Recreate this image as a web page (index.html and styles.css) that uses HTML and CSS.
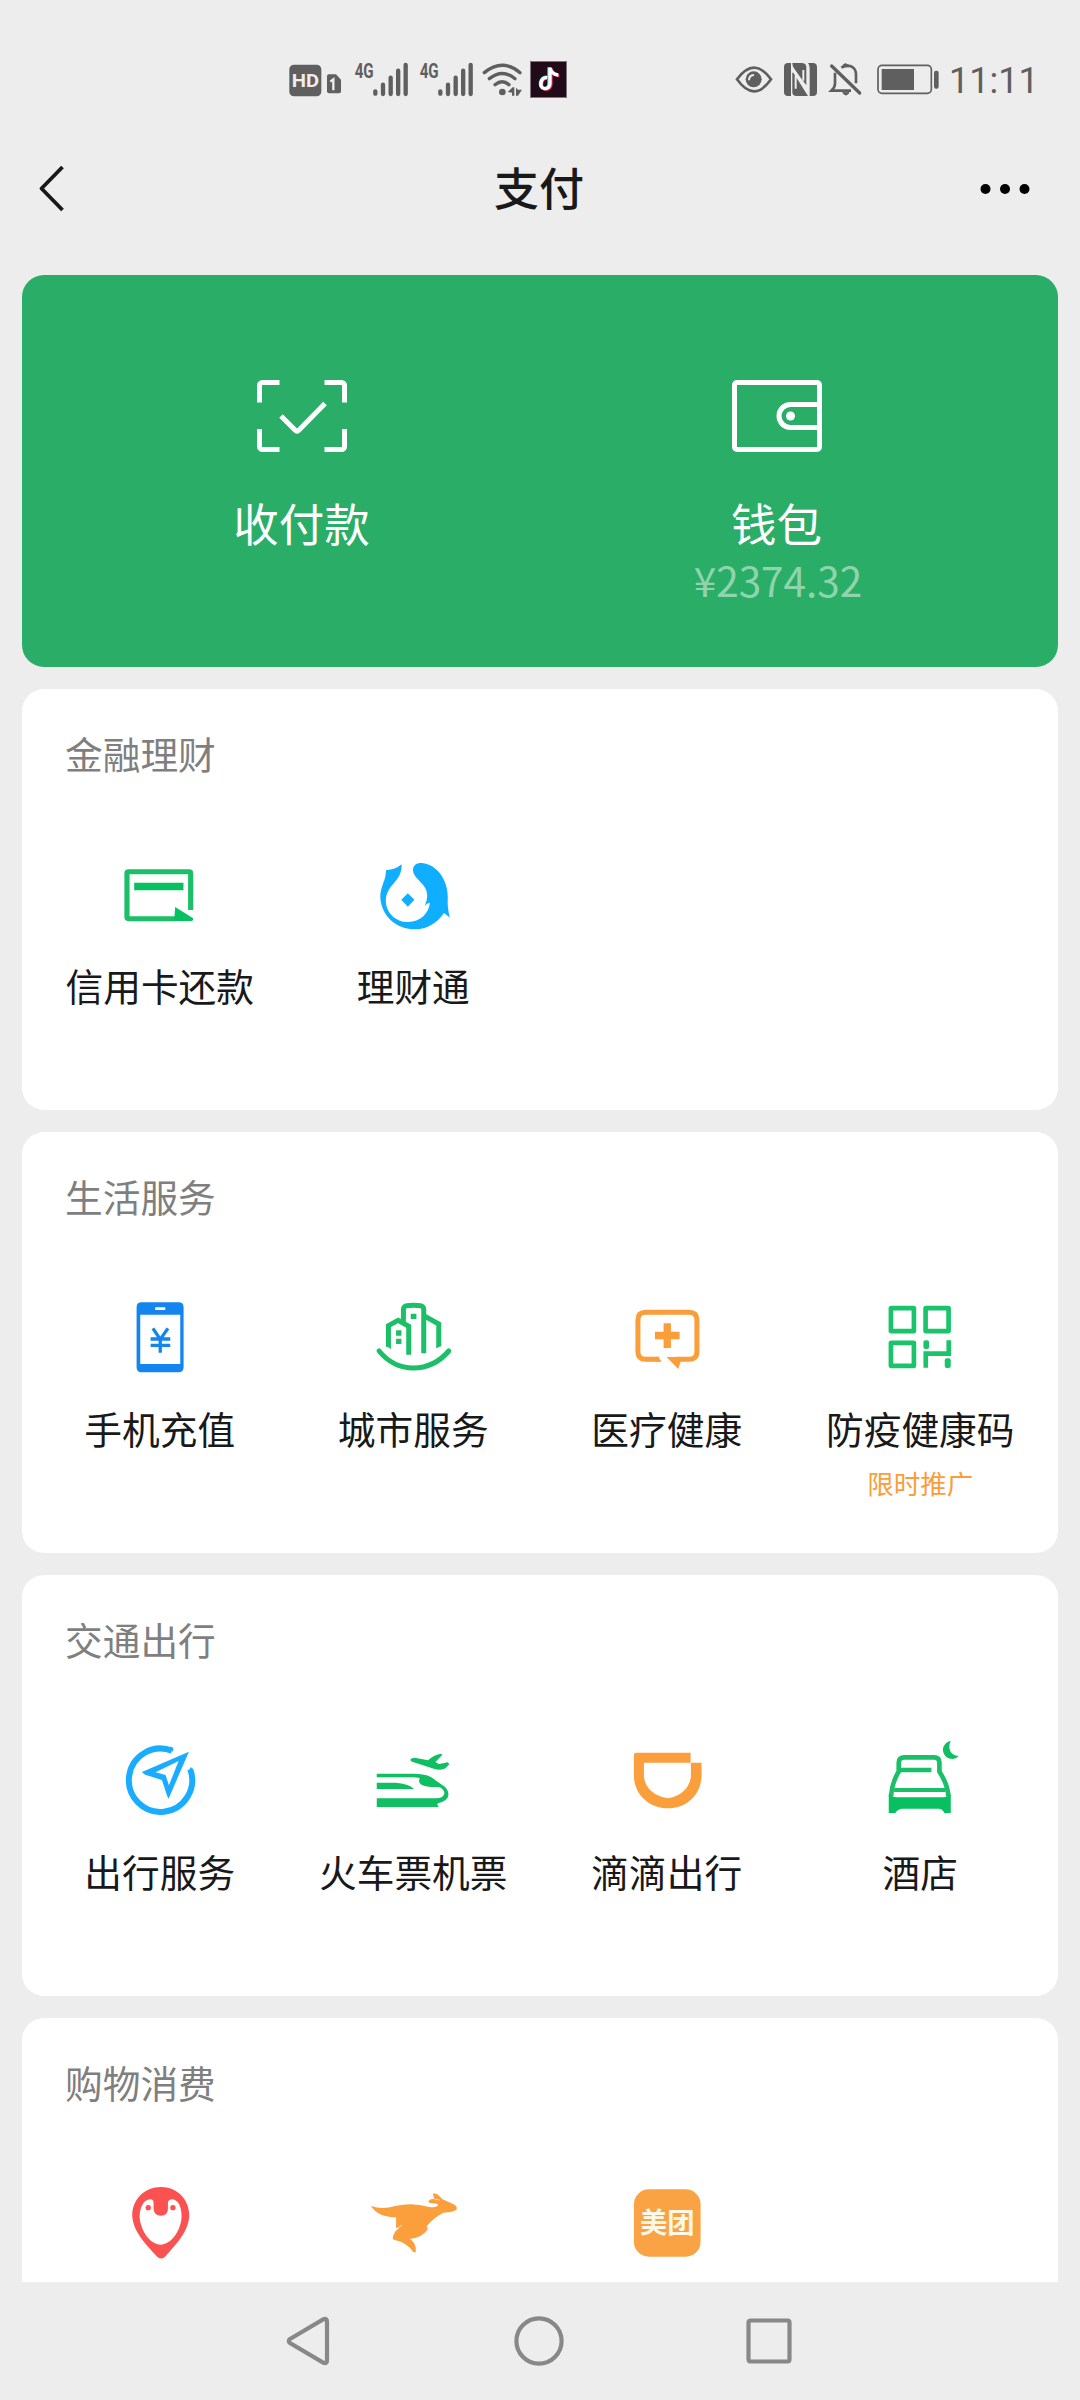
FILE: index.html
```
<!DOCTYPE html>
<html lang="zh-CN">
<head>
<meta charset="utf-8">
<title>支付</title>
<link rel="stylesheet" href="styles.css">
</head>
<body>
<div class="screen">
  <div class="status">
    <div class="status-left">
      <svg width="65" height="80" viewBox="45 0 195 240">
        <rect x="58" y="74" width="96" height="95" rx="14" fill="#5f5f5f"/>
        <text x="106" y="142" class="hd-text" text-anchor="middle" textLength="82" lengthAdjust="spacingAndGlyphs">HD</text>
        <path d="M176 103h22l15 16v35q0 6-6 6h-30q-6 0-6-6v-45q0-6 5-6z" fill="#5f5f5f"/>
        <path d="M181 125l9-7v33" fill="none" stroke="#ededed" stroke-width="7"/>
      </svg>
      <svg width="65" height="80" viewBox="240 0 195 240">
        <text x="254" y="113" class="net-text" textLength="57" lengthAdjust="spacingAndGlyphs">4G</text>
        <path d="M316 154v7M339 134v28M362 113v49M384.500 92v70M407 75v87" class="signal"/>
      </svg>
      <svg width="65" height="80" viewBox="240 0 195 240">
        <text x="254" y="113" class="net-text" textLength="57" lengthAdjust="spacingAndGlyphs">4G</text>
        <path d="M316 154v7M339 134v28M362 113v49M384.500 92v70M407 75v87" class="signal"/>
      </svg>
      <svg width="46" height="80" viewBox="630 0 138 240">
        <path d="M643 98q54-44 107 0M658 116q39-31 77 0M675 134q22-18 42 0" fill="none" stroke="#5f5f5f" stroke-width="10" stroke-linecap="round"/>
        <circle cx="697" cy="156" r="10" fill="#5f5f5f"/>
        <path d="M713 156l15-14h5v25h-7v-9zM738 143l6 6h12l-12 18h-6z" fill="#5f5f5f"/>
      </svg>
      <svg width="44" height="80" viewBox="768 0 132 240">
        <rect x="781.500" y="64.500" width="108" height="108" fill="#210b18" stroke="#84737e" stroke-width="3"/>
        <g fill="none" stroke-width="10">
          <path d="M830 112c-20-4-27 31-8 33 10 1 15-6 15-15V82c2 12 12 22 25 22" stroke="#55d8dc"/>
          <path d="M834 115c-20-4-27 31-8 33 10 1 17-6 17-15V85c2 12 12 22 25 22" stroke="#e22b55"/>
          <path d="M832 113c-20-4-27 31-8 33 10 1 16-6 16-15V83c2 12 12 22 25 22" stroke="#fff"/>
        </g>
      </svg>
    </div>
    <div class="status-right">
      <svg width="48" height="80" viewBox="66 0 144 240">
        <path d="M81 118q51-70 102 0q-51 72-102 0z" fill="none" stroke="#5f5f5f" stroke-width="8"/>
        <circle cx="131" cy="118" r="24" fill="#5f5f5f"/>
        <path d="M117 121q0-15 15-16" fill="none" stroke="#ededed" stroke-width="6"/>
      </svg>
      <svg width="46" height="80" viewBox="210 0 138 240">
        <path d="M234 69h9v99h-9q-12 0-12-12V81q0-12 12-12z" fill="#5f5f5f"/>
        <path d="M247 69h30q12 1 12 14v53L250 84q-3-8-3-15z" fill="#5f5f5f"/>
        <path d="M294 69h15q12 0 12 12v75q0 12-12 12h-10V84q0-9-5-15z" fill="#5f5f5f"/>
        <path d="M250 98L294 168H257q-10-1-10-11V98z" fill="#5f5f5f"/>
        <path d="M257 106v40M280 90v32" stroke="#ededed" stroke-width="6"/>
        <path d="M246 82l48 73" stroke="#ededed" stroke-width="7"/>
      </svg>
      <svg width="48" height="80" viewBox="348 0 144 240">
        <path d="M375 98v33q0 10-11 21h59M394 83q18-11 33-2q11 7 11 23v26" fill="none" stroke="#5f5f5f" stroke-width="8"/>
        <path d="M398 82q0-10 8-11q9 1 9 11M398 158h19q-9 14-19 0z" fill="#5f5f5f" stroke="#5f5f5f" stroke-width="3"/>
        <path d="M365 78l84 81" stroke="#5f5f5f" stroke-width="10" stroke-linecap="round"/>
      </svg>
      <svg width="77" height="80" viewBox="492 0 231 240">
        <rect x="504" y="76" width="160" height="84" rx="12" fill="none" stroke="#5f5f5f" stroke-width="5"/>
        <rect x="515" y="87" width="97" height="63" fill="#5f5f5f"/>
        <rect x="672" y="92" width="14" height="54" rx="6" fill="#5f5f5f"/>
      </svg>
      <span class="clock">11:11</span>
    </div>
  </div>

  <header class="topbar">
    <svg width="28" height="52" viewBox="0 0 28 52"><path d="M25.500 4L4.500 25.500 25.500 47" fill="none" stroke="#191919" stroke-width="3.800" stroke-linejoin="round"/></svg>
    <h1 class="page-title">支付</h1>
    <svg width="50" height="12" viewBox="0 0 50 12"><circle cx="5.500" cy="6" r="5"/><circle cx="25" cy="6" r="5"/><circle cx="44.500" cy="6" r="5"/></svg>
  </header>

  <main class="cards">
    <section class="hero">
      <div class="hero-item">
        <svg class="hero-icon" viewBox="0 0 90 72" fill="none" stroke="#fff" stroke-width="5">
          <path d="M2.500 22.500V5.500a3 3 0 0 1 3-3H22.500M67.500 2.500H84.500a3 3 0 0 1 3 3V22.500M87.500 49V66.500a3 3 0 0 1-3 3H67.500M22.500 69.500H5.500a3 3 0 0 1-3-3V49M24 36L38 50Q40 52 42 50L68 23.500"/>
        </svg>
        <span class="hero-label">收付款</span>
      </div>
      <div class="hero-item">
        <svg class="hero-icon" viewBox="0 0 90 72" fill="none" stroke="#fff" stroke-width="5">
          <rect x="2.500" y="2.500" width="85" height="67" rx="2.500"/>
          <path d="M87 24.500H58.500a11.500 11.500 0 0 0 0 23H87"/>
          <circle cx="58.500" cy="36" r="4.500" fill="#fff" stroke="none"/>
        </svg>
        <span class="hero-label">钱包</span>
        <span class="amount">¥2374.32</span>
      </div>
    </section>

    <section class="card">
      <h2 class="card-title">金融理财</h2>
      <div class="grid">
        <div class="item">
          <svg class="icon" viewBox="324.500 531 278.800 288" preserveAspectRatio="none">
            <path d="M508 746H372q-4 0-4-4V610q0-5 4-5H549q4 0 4 5V720" fill="none" stroke="#1bbf68" stroke-width="15"/>
            <path d="M389 638H532V661H389zM508 711L560 745V748q0 5-5 5H505z" fill="#07c160"/>
          </svg>
          <span class="label">信用卡还款</span>
        </div>
        <div class="item">
          <svg class="icon" viewBox="1060.600 531 278.800 288" preserveAspectRatio="none" fill="#10aeff">
            <path d="M1122 600Q1146 601 1167 583C1168 608 1158 625 1143 641C1128 658 1121 674 1121 692C1122 729 1150 756 1185 756C1221 755 1246 731 1249 698Q1240 699 1234 707C1244 685 1245 663 1229 644C1215 628 1199 616 1200 598C1202 584 1212 578 1226 579C1270 583 1302 631 1301 683Q1299 711 1307 743Q1300 736 1290 729C1270 759 1240 779 1203 778C1148 776 1107 735 1105 681C1105 655 1117 635 1120 617Q1121 609 1122 600z"/>
            <path d="M1185 670L1204 689 1185 710 1166 689z"/>
          </svg>
          <span class="label">理财通</span>
        </div>
      </div>
    </section>

    <section class="card">
      <h2 class="card-title">生活服务</h2>
      <div class="grid">
        <div class="item">
          <svg class="icon" viewBox="35.250 60 288 288">
            <path fill-rule="evenodd" d="M124 97H235Q250 97 250 112V292Q250 307 235 307H124Q109 307 109 292V112Q109 97 124 97zM120 134V282H240V134zM165 112V120H195V112z" fill="#1485ee"/>
            <path d="M158 175L180 208 203 175M180 207V248M151 207H210M151 226H210" fill="none" stroke="#1485ee" stroke-width="10"/>
          </svg>
          <span class="label">手机充值</span>
        </div>
        <div class="item">
          <svg class="icon" viewBox="795.750 60 288 288">
            <g fill="none" stroke="#1bbf68" stroke-width="15">
              <path d="M927 254V169L895 151 866 167V230M911 160V119Q911 109 921 107Q941 104 962 107Q972 109 972 119V250M976 139L1017 162V229"/>
              <path d="M838 243Q880 294 941 294Q1003 294 1047 243" stroke-linecap="round"/>
            </g>
            <path d="M933 131h17v16h-17zM889 181h16v16h-16zM889 206h16v16h-16zM858 228l16 1v8zM1009 235v-8h16z" fill="#1bbf68"/>
          </svg>
          <span class="label">城市服务</span>
        </div>
        <div class="item">
          <svg class="icon" viewBox="56.250 60 288 288">
            <path d="M177 268H136Q113 268 113 245V150Q113 127 136 127H266Q290 127 290 150V245Q290 268 266 268H225" fill="none" stroke="#fa9d3b" stroke-width="15"/>
            <path d="M165 260h7l13 15h-20zM199 261H245L234 297zM190 160h22v25h26v23h-26v26h-22v-26h-26v-23h26z" fill="#fa9d3b"/>
          </svg>
          <span class="label">医疗健康</span>
        </div>
        <div class="item">
          <svg class="icon" viewBox="816.750 60 288 288">
            <g fill="none" stroke="#1bc36a" stroke-width="14">
              <rect x="873.500" y="114.500" width="69" height="69" rx="1"/><rect x="977.500" y="114.500" width="69" height="69" rx="1"/><rect x="873.500" y="218.500" width="69" height="69" rx="1"/>
              <path d="M1047 211V251H978V293"/>
            </g>
            <rect x="971" y="211" width="17" height="26" rx="6" fill="#1bc36a"/><rect x="1035" y="265" width="18" height="29" rx="6" fill="#1bc36a"/>
          </svg>
          <span class="label">防疫健康码</span>
          <span class="note">限时推广</span>
        </div>
      </div>
    </section>

    <section class="card">
      <h2 class="card-title">交通出行</h2>
      <div class="grid">
        <div class="item">
          <svg class="icon" viewBox="35.250 39 288 288">
            <path d="M215 92A95 95 0 1 0 270 148" fill="none" stroke="#1aadff" stroke-width="18"/>
            <path fill-rule="evenodd" d="M266 95L205 236Q202 232 200 226L185 180 135 164Q128 160 125 156zM166 157L196 165 206 196 235 123z" fill="#1aadff"/>
            <path d="M211 78l9 8-4 11zM264 155l8-15 8 15z" fill="#1aadff"/>
          </svg>
          <span class="label">出行服务</span>
        </div>
        <div class="item">
          <svg class="icon" viewBox="795.750 39 288 288">
            <path d="M831 161H939Q986 160 1006 180L1035 200Q1047 211 1046 226Q1044 243 1014 250Q1011 253 1017 261H831V235H1007Q1033 235 1034 219Q1030 202 1014 201Q980 202 965 194Q954 188 960 174Q948 172 939 172H831zM831 188H887Q926 190 943 207H831z" fill="#10bf62"/>
            <path d="M932 118Q938 112 949 114L985 121Q1004 103 1024 101L1028 104 1007 126 1017 132Q1031 131 1043 127L1049 132 1037 145Q1024 153 1002 146L937 125Q931 123 932 118z" fill="#10bf62"/>
          </svg>
          <span class="label">火车票机票</span>
        </div>
        <div class="item">
          <svg class="icon" viewBox="56.250 39 288 288">
            <path d="M108 98H271V128H304V170C300 230 255 265 203 265C149 265 105 227 101 173V106Q101 98 108 98zM131 128V172Q140 224 203 235Q262 224 272 172V128z" fill-rule="evenodd" fill="#fa9f3c"/>
          </svg>
          <span class="label">滴滴出行</span>
        </div>
        <div class="item">
          <svg class="icon" viewBox="816.750 39 288 288">
            <g fill="none" stroke="#1bbf68" stroke-width="14">
              <path d="M897 158V128Q897 112 914 112H1003Q1019 112 1019 128V155Q1044 193 1046 230M903 150H995M897 154Q875 192 874 230"/>
              <path d="M883 210H1037" stroke-width="12"/>
            </g>
            <path d="M867 222Q876 232 890 232H1031Q1044 232 1053 222V279H1034Q1028 266 1016 266H906Q894 267 887 279H867z" fill="#07c160"/>
            <path d="M1053 62Q1031 68 1029 90Q1033 117 1060 117Q1070 116 1077 107C1056 109 1041 87 1053 62z" fill="#10bf62"/>
          </svg>
          <span class="label">酒店</span>
        </div>
      </div>
    </section>

    <section class="card">
      <h2 class="card-title">购物消费</h2>
      <div class="grid">
        <div class="item">
          <svg class="icon" viewBox="35.250 78 288 288">
            <path d="M182 111C232 111 268 149 267 199C263 249 225 285 196 319Q183 332 169 319C140 285 100 249 96 199C95 149 132 111 182 111z" fill="#fa5151"/>
            <path d="M150 148Q159 148 160 158V177Q162 197 182 197Q202 197 203 177V158Q205 148 216 148C235 149 245 174 244 201C242 244 211 284 181 284C151 284 121 244 118 201C118 174 130 148 150 148z" fill="#fff"/>
            <circle cx="144" cy="173" r="8" fill="#fa5151"/><circle cx="218" cy="173" r="8" fill="#fa5151"/>
          </svg>
        </div>
        <div class="item">
          <svg class="icon" viewBox="795.750 78 288 288">
            <path d="M813 168Q849 180 886 168Q938 156 985 170Q1004 174 1013 168L1015 162 987 158Q985 146 1004 147L999 131Q1013 127 1027 147L1065 164Q1073 170 1071 178Q1065 187 1030 188Q1001 204 981 228L984 238Q965 265 930 267Q950 277 948 307L940 306Q926 280 879 268Q878 249 898 234H889V202Q836 202 813 168z" fill="#fa9f3c"/>
            <path d="M890 236l17-10" stroke="#fff" stroke-width="2"/>
            <path d="M1005 148l15 2" stroke="#fff" stroke-width="2"/>
          </svg>
        </div>
        <div class="item">
          <svg class="icon" viewBox="176.250 78 288 288">
            <rect x="221" y="118" width="200" height="202" rx="45" fill="#faa345"/>
            <text x="321" y="249" class="brand" text-anchor="middle" textLength="164" lengthAdjust="spacingAndGlyphs">美团</text>
          </svg>
        </div>
      </div>
    </section>
  </main>

  <nav class="navbar">
    <svg width="46" height="54" viewBox="0 0 46 54"><path d="M4 25L37.500 5.200Q41 4 41 7.500V46.500Q41 50 37.500 48.800L4 29Q1.500 27 4 25z"/></svg>
    <svg width="50" height="50" viewBox="0 0 50 50"><circle cx="25" cy="25" r="22.600"/></svg>
    <svg width="46" height="46" viewBox="0 0 46 46"><rect x="2.500" y="2.500" width="41" height="41" rx="2"/></svg>
  </nav>
</div>
</body>
</html>
```
FILE: styles.css
```
* { box-sizing: border-box; }

body {
  margin: 0;
  background: #ededed;
  color: #191919;
  font-family: "Noto Sans CJK SC", sans-serif;
}

.screen {
  width: 1080px;
  height: 2400px;
  display: flex;
  flex-direction: column;
  overflow: hidden;
}

svg { display: block; flex: none; }

.status {
  height: 120px;
  padding: 40px 45px 0 285px;
  display: flex;
  justify-content: space-between;
}

.status-left, .status-right { display: flex; height: 80px; }
.hd-text { font: 700 54px "Roboto", sans-serif; fill: #ededed; }
.net-text { font: 700 59px "Roboto", sans-serif; fill: #5f5f5f; }
.signal { stroke: #5f5f5f; stroke-width: 13px; stroke-linecap: round; }

.clock {
  width: 84px;
  font: 400 36px/83px "Roboto", sans-serif;
  text-indent: -2px;
  color: #5f5f5f;
  white-space: nowrap;
}

.topbar {
  height: 155px;
  padding: 0 50px 17px 37px;
  display: grid;
  grid-template-columns: 50px 1fr 50px;
  align-items: center;
}

.page-title {
  margin: 0;
  padding: 0 0 6px 11px;
  text-align: center;
  font-size: 45px;
  line-height: 57px;
  font-weight: 500;
}

.cards {
  flex: 1;
  min-height: 0;
  overflow: hidden;
  padding: 0 22px;
  display: flex;
  flex-direction: column;
  gap: 22px;
}

.hero {
  flex: none;
  height: 392px;
  padding: 105px 44px 0 42px;
  border-radius: 22px;
  background: #2aae67;
  color: #fff;
  display: grid;
  grid-template-columns: 1fr 1fr;
}

.hero-item { display: flex; flex-direction: column; align-items: center; }
.hero-icon { width: 90px; height: 72px; }
.hero-label { margin-top: 38px; font-size: 45.5px; line-height: 64px; }

.amount {
  margin-top: -6px;
  padding-left: 3px;
  font-size: 40.5px;
  line-height: 64px;
  color: #90d4ae;
}

.card {
  flex: none;
  height: 421px;
  border-radius: 22px;
  background: #fff;
}

.card-title {
  margin: 0;
  padding: 34px 43px 0;
  font-size: 37.7px;
  line-height: 60px;
  font-weight: 400;
  color: #7f7f7f;
}

.grid {
  padding: 64px 11px 0;
  display: grid;
  grid-template-columns: repeat(4, 1fr);
}

.item { display: flex; flex-direction: column; align-items: center; }
.icon { width: 96px; height: 96px; }
.label { margin-top: 12px; font-size: 37.7px; line-height: 60px; white-space: nowrap; }
.note { margin-top: 5px; font-size: 26.5px; line-height: 40px; color: #fa9d3b; }
.brand { font: 700 84px "Noto Sans CJK SC", sans-serif; fill: #fff8e6; }

.navbar {
  flex: none;
  height: 118px;
  padding: 0 288px 0 286px;
  display: grid;
  grid-template-columns: 46px 1fr 46px;
  justify-items: center;
  align-items: center;
}

.navbar svg { fill: none; stroke: #888; stroke-width: 4.2px; }
```
